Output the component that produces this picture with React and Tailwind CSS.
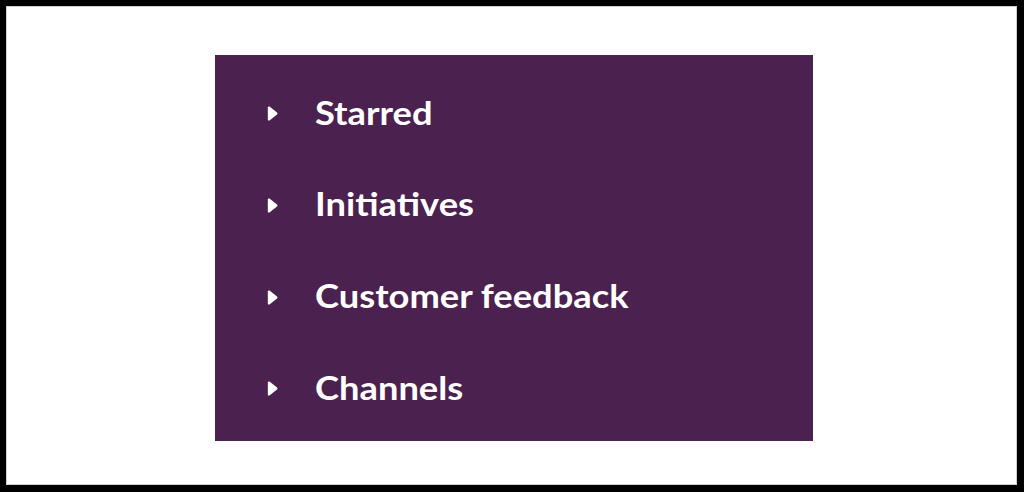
import React from "react";

const sections = ["Starred", "Initiatives", "Customer feedback", "Channels"];

// small right-pointing caret with softened corners
const Caret = () => (
  <svg width="11" height="15" viewBox="0 0 11 15" className="shrink-0">
    <path
      d="M0.8 1.6 C0.8 0.5 1.9 0 2.8 0.7 L10 6.4 C10.6 6.9 10.6 8.1 10 8.6 L2.8 14.3 C1.9 15 0.8 14.5 0.8 13.4 Z"
      fill="#ffffff"
    />
  </svg>
);

const SectionRow = ({ name }) => (
  <div className="flex h-[91.67px] items-center">
    <div className="ml-[52px] mt-[4px] flex w-[48px] items-center">
      <Caret />
    </div>
    <span className="origin-left scale-x-110 text-[33px] font-bold leading-[36px] whitespace-nowrap text-white">
      {name}
    </span>
  </div>
);

const App = () => {
  return (
    <div className="h-[492px] w-[1024px] bg-black p-[6px] pr-[7px] pb-[7px]">
      <div className="h-full w-full border border-[#cfcfcf] bg-white pt-[48px] pl-[208px]">
        <div
          className="h-[386px] w-[598px] bg-[#4a214f] pt-[11px]"
          style={{ fontFamily: "Lato, 'Noto Sans', sans-serif" }}
        >
          {sections.map((s) => (
            <SectionRow key={s} name={s} />
          ))}
        </div>
      </div>
    </div>
  );
};

export default App;
